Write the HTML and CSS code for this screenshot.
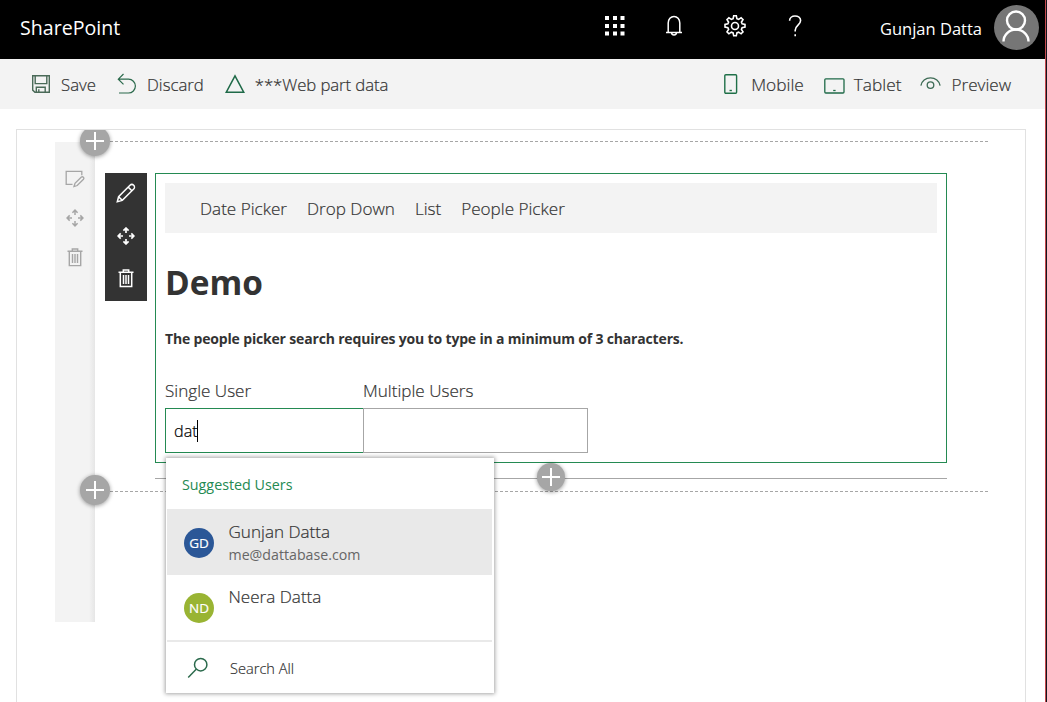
FILE: index.html
```html
<!DOCTYPE html>
<html lang="en">
<head>
<meta charset="utf-8">
<title>SharePoint</title>
<link rel="stylesheet" href="styles.css">
</head>
<body>
<div class="app">
  <header class="suite-bar">
    <span class="brand">SharePoint</span>
    <nav class="suite-actions">
      <svg width="20" height="20" viewBox="0 0 20 20" fill="#fff"><path d="M0 0h4v4H0zM8 0h4v4H8zM15.500 0h4v4h-4zM0 8h4v4H0zM8 8h4v4H8zM15.500 8h4v4h-4zM0 15.500h4v4H0zM8 15.500h4v4H8zM15.500 15.500h4v4h-4z"/></svg>
      <svg class="bell" width="20" height="22" viewBox="0 0 20 22" fill="none" stroke="#fff" stroke-width="1.5"><path d="M2 17.500h16M4.200 17.500V8a5.800 6.600 0 0 1 11.600 0v9.500M7.500 17.500a2.500 2.400 0 0 0 5 0"/></svg>
      <svg class="gear" width="24" height="24" viewBox="0 0 24 24" fill="none" stroke="#fff" stroke-width="1.6"><circle cx="12" cy="12" r="3.500"/><path d="M10.700 1.800h2.600l.6 2.900 1.700.7 2.500-1.600 1.900 1.900-1.600 2.500.7 1.700 2.900.6v2.600l-2.900.6-.7 1.700 1.600 2.500-1.900 1.900-2.500-1.600-1.700.7-.6 2.900h-2.600l-.6-2.900-1.700-.7-2.500 1.600-1.900-1.900 1.600-2.500-.7-1.700-2.900-.6v-2.600l2.900-.6.7-1.700-1.600-2.500 1.900-1.900 2.500 1.600 1.700-.7z"/></svg>
      <svg width="14" height="22" viewBox="0 0 14 22" fill="none" stroke="#fff" stroke-width="1.600"><path d="M1.600 5.800C1.600 2.800 4 1 7 1s5.600 1.700 5.600 4.600c0 4.400-5.400 4.700-5.400 9.600v1.300M7.200 19.300v2"/></svg>
    </nav>
    <span class="user-name">Gunjan Datta</span>
    <svg class="avatar" width="45" height="45" viewBox="0 0 45 45"><circle cx="22.500" cy="22.500" r="22.500" fill="#767676"/><g fill="none" stroke="#fff" stroke-width="2.400"><circle cx="22" cy="15.500" r="9"/><path d="M9.500 36.500a12.500 12 0 0 1 25 0"/></g></svg>
  </header>

  <div class="command-bar">
    <div class="command">
      <svg width="20" height="20" viewBox="0 0 20 20" fill="none" stroke="#4a6a58" stroke-width="1.400"><path d="M1.700 1.700h16.600v16.600H3.900l-2.200-2.200zM4.200 1.700v7.900h11.600V1.700M5.300 18.300v-5.100h8.900v5.100M7.800 18.300v-3"/></svg>
      <span>Save</span>
    </div>
    <div class="command discard">
      <svg width="20" height="22" viewBox="0 0 20 22" fill="none" stroke="#2b6a4c" stroke-width="1.200"><path d="M6.500 1L1.300 6.200l5.200 5.200M1.300 6.200h10.200a6.900 6.900 0 0 1 0 13.800H2"/></svg>
      <span>Discard</span>
    </div>
    <div class="command warning">
      <svg width="20" height="20" viewBox="0 0 20 20" fill="none" stroke="#1f6a48" stroke-width="1.500"><path d="M10 1.800L18.800 18.300H1.200z"/></svg>
      <span>***Web part data</span>
    </div>
    <div class="command mobile">
      <svg width="14" height="20" viewBox="0 0 14 20" fill="none" stroke="#1f7048" stroke-width="1.400"><rect x=".8" y=".7" width="11.800" height="18.600" rx="1"/><path d="M5.500 16.500h2.400"/></svg>
      <span>Mobile</span>
    </div>
    <div class="command tablet">
      <svg width="21" height="16" viewBox="0 0 21 16" fill="none" stroke="#1f6a48" stroke-width="1.300"><rect x=".8" y=".8" width="19.200" height="14.200" rx="1"/><path d="M9.200 12.500h2.400"/></svg>
      <span>Tablet</span>
    </div>
    <div class="command preview">
      <svg width="21" height="14" viewBox="0 0 21 14" fill="none" stroke="#3d6b55" stroke-width="1.300"><path d="M.9 9.600a9.700 9 0 0 1 19.200 0"/><circle cx="10.500" cy="9.100" r="3.300"/></svg>
      <span>Preview</span>
    </div>
  </div>

  <main class="canvas">
    <aside class="section-tools">
      <svg width="20" height="18" viewBox="0 0 20 18" fill="none" stroke="#a6a6a6" stroke-width="1.300"><path d="M7.500 14.300H1.200V1.300h15.600v4M9 16.500l1-3.200 6.400-6.200a1.500 1.500 0 0 1 2.100 2.100l-6.300 6.300z"/></svg>
      <svg width="18" height="18" viewBox="0 0 18 18" fill="none" stroke="#a6a6a6" stroke-width="1.500"><path d="M9 6V1M6.400 3.700L9 1.100l2.600 2.600M9 12v5M6.400 14.300L9 16.900l2.600-2.600M6 9H1M3.700 6.400L1.100 9l2.600 2.600M12 9h5M14.300 6.400L16.900 9l-2.600 2.600"/></svg>
      <svg width="16" height="19" viewBox="0 0 16 19" fill="none" stroke="#a6a6a6" stroke-width="1.400"><path d="M.5 3.200h15M5.300 3V1h5.400v2M2.300 3.400v14.200h11.400V3.400M5.500 6v9M8 6v9M10.500 6v9"/></svg>
    </aside>
    <section class="section">
      <button class="add-button add-top" aria-label="Add section"></button>
      <button class="add-button add-bottom" aria-label="Add section"></button>
      <div class="part-row">
        <aside class="part-tools">
          <svg width="20" height="20" viewBox="0 0 20 20" fill="none" stroke="#fff" stroke-width="1.500"><path d="M1.300 18.700l1.300-5L14 2.300a2.600 2.600 0 0 1 3.700 3.700L6.300 17.400zM12.200 4.100l3.700 3.700M2.600 13.700l3.700 3.700"/></svg>
          <svg width="18" height="18" viewBox="0 0 18 18" fill="none" stroke="#fff" stroke-width="1.700"><path d="M9 6V1M6.400 3.700L9 1.100l2.600 2.600M9 12v5M6.400 14.300L9 16.900l2.600-2.600M6 9H1M3.700 6.400L1.100 9l2.600 2.600M12 9h5M14.300 6.400L16.900 9l-2.600 2.600"/></svg>
          <svg width="16" height="19" viewBox="0 0 16 19" fill="none" stroke="#fff" stroke-width="1.500"><path d="M.5 3.200h15M5.300 3V1h5.400v2M2.300 3.400v14.200h11.400V3.400M5.500 6v9M8 6v9M10.500 6v9"/></svg>
        </aside>
        <article class="web-part">
          <nav class="part-nav"><a>Date Picker</a><a>Drop Down</a><a>List</a><a>People Picker</a></nav>
          <h1 class="title">Demo</h1>
          <p class="hint">The people picker search requires you to type in a minimum of 3 characters.</p>
          <div class="fields">
            <div class="field single">
              <label>Single User</label>
              <div class="input active"><span class="typed">dat</span><i class="caret"></i></div>
              <div class="callout">
                <div class="callout-title">Suggested Users</div>
                <div class="person selected">
                  <span class="coin blue">GD</span>
                  <div class="person-text"><span class="person-name">Gunjan Datta</span><span class="person-mail">me@dattabase.com</span></div>
                </div>
                <div class="person">
                  <span class="coin green">ND</span>
                  <div class="person-text"><span class="person-name">Neera Datta</span></div>
                </div>
                <div class="search-all">
                  <svg width="22" height="22" viewBox="0 0 22 22" fill="none" stroke="#2b6a4c" stroke-width="1.500"><circle cx="13.700" cy="7.700" r="6.200"/><path d="M9.200 12.200L1.200 20.400"/></svg>
                  <span>Search All</span>
                </div>
              </div>
            </div>
            <div class="field multiple">
              <label>Multiple Users</label>
              <div class="input"></div>
            </div>
          </div>
        </article>
      </div>
      <div class="insert-line"><button class="add-button small" aria-label="Add web part"></button></div>
    </section>
  </main>
</div>
</body>
</html>
```

FILE: styles.css
```css
* { box-sizing: border-box; }
body {
  margin: 0;
  background: #fff;
  color: #333;
  font-family: "Open Sans", "Noto Sans", sans-serif;
  font-size: 17.1px;
  font-weight: 350;
  -webkit-text-stroke: .2px;
}
svg { display: block; flex: none; }
.app {
  height: 702px;
  overflow: hidden;
  border-right: 1px solid #15151c;
  box-shadow: inset -1px 0 #c4474d;
  padding-right: 1px;
}

.suite-bar {
  display: flex;
  align-items: center;
  height: 59px;
  padding: 0 6px 0 20px;
  background: #000;
  color: #fff;
  -webkit-text-stroke: 0;
}
.brand { width: 585px; font-size: 19.6px; font-weight: 400; line-height: 55px; height: 59px; }
.suite-actions { display: flex; align-items: center; justify-content: space-between; width: 197px; margin-top: -8px; }
.bell { margin-right: -1px; }
.gear { margin-right: 2px; }
.user-name { margin-left: auto; margin-top: -2px; font-size: 16.5px; font-weight: 400; }
.avatar { margin-left: 12px; margin-top: -4px; }

.command-bar {
  display: flex;
  align-items: center;
  height: 50px;
  padding-left: 31px;
  background: #f3f3f3;
  font-size: 16.8px;
}
.command { display: flex; align-items: center; gap: 10px; white-space: nowrap; }
.discard { margin-left: 21px; }
.warning { margin-left: 21px; }
.warning span { letter-spacing: -.1px; }
.mobile { margin-left: auto; gap: 13px; font-size: 17.3px; }
.tablet { margin-left: 20px; gap: 9px; font-size: 17.3px; }
.tablet svg { margin-top: 3px; }
.preview { margin-left: 19px; margin-right: 34px; gap: 10px; font-size: 17.1px; }
.preview svg { margin-bottom: 3px; }

.canvas {
  display: flex;
  align-items: flex-start;
  height: 580px;
  margin: 20px 19px 0 16px;
  padding-left: 38px;
  border: 1px solid #e1e1e1;
  overflow: hidden;
}
.section-tools {
  display: flex;
  flex-direction: column;
  align-items: center;
  width: 40px;
  height: 480px;
  margin-top: 12px;
  padding-top: 28px;
  gap: 21px;
  background: linear-gradient(to left, #e6e6e6, #f3f3f3 6px);
}
.section {
  position: relative;
  width: 893px;
  height: 351px;
  margin-top: 11px;
  padding: 32px 0 0 10px;
  background:
    repeating-linear-gradient(to right, #a6a6a6 0 3px, transparent 3px 5px) 0 0 / 100% 1px no-repeat,
    repeating-linear-gradient(to right, #a6a6a6 0 3px, transparent 3px 5px) 0 100% / 100% 1px no-repeat;
}
.add-button {
  position: absolute;
  width: 30px;
  height: 30px;
  padding: 0;
  border: 0;
  border-radius: 50%;
  background:
    linear-gradient(#fff, #fff) 50% 50% / 18px 2px no-repeat,
    linear-gradient(#fff, #fff) 50% 50% / 2px 18px no-repeat,
    #a6a6a6;
  box-shadow: 0 1px 4px rgba(0, 0, 0, .4);
}
.add-top { left: -15px; top: -15px; }
.add-bottom { left: -15px; top: 334px; }
.part-row { display: flex; align-items: flex-start; gap: 8px; }
.part-tools {
  display: flex;
  flex-direction: column;
  align-items: center;
  width: 42px;
  height: 128px;
  padding-top: 10px;
  gap: 24px;
  background: #333;
}
.web-part {
  width: 792px;
  height: 290px;
  padding: 9px;
  border: 1px solid #248a52;
}
.part-nav {
  display: flex;
  align-items: center;
  gap: 20px;
  height: 50px;
  padding-left: 35px;
  background: #f3f3f3;
}
.title { margin: 24px 0 0; font-size: 33.4px; font-weight: 700; line-height: 50px; -webkit-text-stroke: 0; }
.hint { margin: 22px 0 0; font-size: 14px; font-weight: 700; line-height: 20px; letter-spacing: -.17px; white-space: nowrap; -webkit-text-stroke: 0; }
.fields { display: flex; margin-top: 30px; }
.field { position: relative; }
.single { width: 198px; }
.multiple { width: 225px; }
.field label { display: block; height: 29px; line-height: 24px; }
.input {
  display: flex;
  align-items: center;
  height: 45px;
  padding-left: 8px;
  border: 1px solid #a6a6a6;
  color: #000;
  font-size: 16.2px;
}
.input.active { border-color: #248a52; border-right: 0; }
.caret { width: 1px; height: 22px; margin-left: -1px; background: #000; }
.callout {
  position: absolute;
  left: 1px;
  top: 79px;
  z-index: 2;
  width: 328px;
  height: 235px;
  padding: 0 2px 0 1px;
  background: #fff;
  box-shadow: 0 0 4px 1px rgba(0, 0, 0, .35);
}
.callout-title { height: 51px; padding-left: 15px; line-height: 54px; font-size: 14.3px; font-weight: 400; color: #248a52; -webkit-text-stroke: 0; }
.person { display: flex; align-items: flex-start; height: 65px; padding-left: 17px; gap: 14.5px; }
.person.selected { height: 66px; background: #e9e9e9; }
.coin {
  width: 30px;
  height: 30px;
  margin-top: 19px;
  border-radius: 50%;
  color: #fff;
  font-size: 13.5px;
  font-weight: 500;
  line-height: 31px;
  text-align: center;
}
.person:not(.selected) .coin { margin-top: 18px; }
.blue { background: #2b5797; }
.green { background: #99b433; }
.person-text { display: flex; flex-direction: column; padding-top: 11px; }
.person:not(.selected) .person-text { padding-top: 10px; }
.person-name { line-height: 24px; }
.person-mail { line-height: 21px; font-size: 14.2px; font-weight: 400; color: #666; -webkit-text-stroke: 0; }
.search-all {
  display: flex;
  align-items: center;
  height: 53px;
  padding-left: 20px;
  gap: 21px;
  border-top: 2px solid #e9e9e9;
  font-size: 14.6px;
}
.insert-line { position: relative; width: 792px; height: 1px; margin: 15px 0 0 50px; background: #a6a6a6; }
.small { left: 382px; top: -15px; width: 28px; height: 28px; }
```
